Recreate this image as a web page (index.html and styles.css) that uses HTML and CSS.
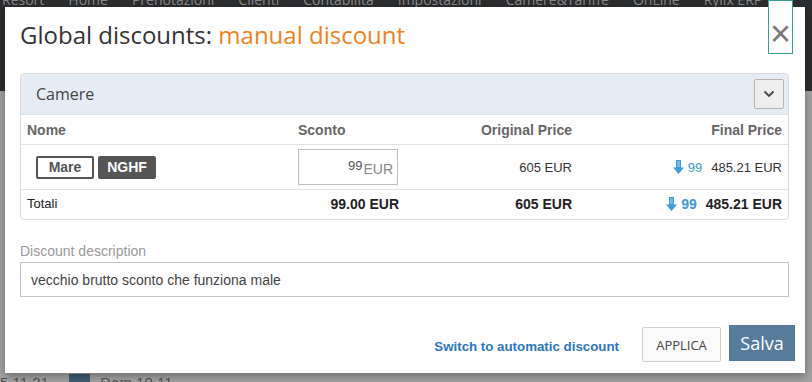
FILE: index.html
```html
<!DOCTYPE html>
<html lang="en">
<head>
  <meta charset="UTF-8" />
  <title>Global discounts</title>
  <link rel="stylesheet" href="styles.css">
</head>
<body>
  <div class="backdrop">
    <div class="app-nav">
      <span>Resort</span><span>Home</span><span>Prenotazioni</span><span>Clienti</span><span>Contabilità</span><span>Impostazioni</span><span>Camere&amp;Tariffe</span><span>OnLine</span><span>Rylix ERP</span>
    </div>
    <div class="app-body">
      <div class="app-foot">5.11 21 <span class="app-chip">8</span> Dom 10.11</div>
    </div>
  </div>

  <div class="modal">
    <button class="close-btn">&times;</button>
    <div class="modal-header">
      <h2>Global discounts: <span class="accent">manual discount</span></h2>
    </div>

    <div class="modal-body">
      <div class="panel">
        <div class="panel-heading">
          <span>Camere</span>
          <button class="toggle-btn">
            <svg width="12" height="8" viewBox="0 0 12 8"><path d="M1.5 1.5 L6 6 L10.5 1.5" fill="none" stroke="#444" stroke-width="1.8"/></svg>
          </button>
        </div>
        <div class="grid head">
          <div>Nome</div>
          <div>Sconto</div>
          <div class="right">Original Price</div>
          <div class="right">Final Price</div>
        </div>
        <div class="grid row">
          <div class="tags">
            <span class="tag">Mare</span>
            <span class="tag dark">NGHF</span>
          </div>
          <div>
            <div class="amount-input"><span class="val">99</span><span class="unit">EUR</span></div>
          </div>
          <div class="right">605 EUR</div>
          <div class="right final">
            <span class="disc"><svg class="arrow" width="11" height="14" viewBox="0 0 11 14"><path d="M3 0 H8 V7.5 H11 L5.5 14 L0 7.5 H3 Z" fill="#3b9ddb"/><path d="M4 2 H7 M4 4 H7 M4 6 H7" stroke="#a9d6f2" stroke-width="1"/></svg>99</span>
            485.21 EUR
          </div>
        </div>
        <div class="grid total">
          <div class="plain">Totali</div>
          <div class="right">99.00 EUR</div>
          <div class="right">605 EUR</div>
          <div class="right final">
            <span class="disc"><svg class="arrow" width="11" height="14" viewBox="0 0 11 14"><path d="M3 0 H8 V7.5 H11 L5.5 14 L0 7.5 H3 Z" fill="#3b9ddb"/><path d="M4 2 H7 M4 4 H7 M4 6 H7" stroke="#a9d6f2" stroke-width="1"/></svg>99</span>
            485.21 EUR
          </div>
        </div>
      </div>

      <div class="field">
        <label>Discount description</label>
        <div class="text-input">vecchio brutto sconto che funziona male</div>
      </div>
    </div>

    <div class="modal-footer">
      <a class="switch-link">Switch to automatic discount</a>
      <button class="btn-apply">APPLICA</button>
      <button class="btn-save">Salva</button>
    </div>
  </div>
</body>
</html>
```

FILE: styles.css
```css
/* Base */
* {
  box-sizing: border-box;
  margin: 0;
  padding: 0;
}

body {
  width: 812px;
  height: 382px;
  overflow: hidden;
  position: relative;
  font-family: 'Liberation Sans', Arial, sans-serif;
  background-color: #9c9c9c;
}

/* Dimmed app behind the modal */
.backdrop {
  height: 100%;
  display: flex;
  flex-direction: column;
}

.app-nav {
  height: 98px;
  background-color: #2c2d2f;
  color: #8a8a8a;
  font-family: 'Open Sans', sans-serif;
  font-size: 14px;
  display: flex;
  gap: 24px;
  line-height: 1;
  margin-top: -7px;
  padding-left: 2px;
}

.app-body {
  flex: 1;
  background-color: #a3a3a3;
  display: flex;
  align-items: flex-end;
}

.app-foot {
  color: #555;
  font-size: 15px;
  margin-bottom: -8px;
  height: 16px;
}

.app-chip {
  display: inline-block;
  background-color: #3d5d74;
  color: #3d5d74;
  width: 21px;
  margin: 0 6px 0 16px;
}

/* Modal */
.modal {
  position: absolute;
  left: 5px;
  top: 7px;
  width: 800px;
  height: 366px;
  background-color: #fff;
  box-shadow: 0 3px 9px rgba(0, 0, 0, 0.35);
  display: flex;
  flex-direction: column;
}

.close-btn {
  position: absolute;
  right: 12px;
  top: -7px;
  width: 25px;
  height: 54px;
  border: 1px solid #3a9e9b;
  background-color: #fff;
  color: #7a7a7a;
  font-family: 'Liberation Sans', Arial, sans-serif;
  font-size: 36px;
  line-height: 1;
  padding-top: 14px;
}

.modal-header {
  padding: 15px;
}

h2 {
  font-family: 'Open Sans', sans-serif;
  font-weight: 400;
  font-size: 24px;
  line-height: 26px;
  color: #333;
}

.accent {
  color: #f0821c;
}

.modal-body {
  padding: 10px 16px 0 15px;
}

/* Panel */
.panel {
  border: 1px solid #d9d9d9;
  border-radius: 4px;
}

.panel-heading {
  height: 41px;
  background-color: #e6ecf4;
  border-bottom: 1px solid #dde3ea;
  border-radius: 4px 4px 0 0;
  display: flex;
  align-items: center;
  justify-content: space-between;
  padding: 0 4px 0 15px;
  font-family: 'Open Sans', sans-serif;
  font-size: 16px;
  color: #444;
}

.toggle-btn {
  width: 30px;
  height: 30px;
  background-color: #eeeeee;
  border: 1px solid #b5b5b5;
  border-radius: 2px;
  display: flex;
  align-items: center;
  justify-content: center;
}

.grid {
  display: grid;
  grid-template-columns: 271px 113px 173px 1fr;
  align-items: center;
  font-size: 14px;
}

.grid > div {
  padding: 0 6px;
}

.grid .right {
  text-align: right;
}

.head {
  height: 30px;
  font-weight: 700;
  color: #666;
  border-bottom: 1px solid #e3e3e3;
}

.row {
  height: 45px;
  color: #333;
  font-size: 13px;
  border-bottom: 1px solid #e3e3e3;
}

.total {
  height: 29px;
  padding-bottom: 2px;
  font-weight: 700;
  color: #222;
}

.total .plain {
  font-weight: 400;
  font-size: 13px;
}

.tags {
  display: flex;
  gap: 4px;
  padding-left: 15px !important;
}

.tag {
  height: 23px;
  width: 58px;
  border: 2px solid #555;
  border-radius: 2px;
  font-weight: 700;
  font-size: 14px;
  color: #555;
  display: flex;
  align-items: center;
  justify-content: center;
}

.tag.dark {
  background-color: #555;
  color: #fff;
}

.amount-input {
  width: 100px;
  height: 36px;
  border: 1px solid #bdbdbd;
  display: flex;
  justify-content: flex-end;
  align-items: center;
  padding-right: 4px;
}

.amount-input .val {
  font-size: 13px;
  color: #555;
  margin-top: -4px;
  margin-right: 1px;
}

.amount-input .unit {
  font-size: 14px;
  color: #888;
  margin-top: 3px;
}

.final {
  display: flex;
  justify-content: flex-end;
  align-items: center;
  gap: 9px;
}

.disc {
  color: #3d9bd6;
  display: inline-flex;
  align-items: center;
  gap: 4px;
}

.total .disc {
  font-size: 14px;
}

/* Description */
.field {
  margin-top: 23px;
}

.field label {
  display: block;
  font-size: 14px;
  color: #999;
  margin-bottom: 3px;
}

.text-input {
  height: 35px;
  border: 1px solid #c4c4c4;
  padding: 0 10px;
  display: flex;
  align-items: center;
  font-size: 14px;
  color: #444;
}

/* Footer */
.modal-footer {
  margin-top: auto;
  padding: 0 10px 11px 0;
  display: flex;
  justify-content: flex-end;
  align-items: center;
}

.switch-link {
  font-size: 13.3px;
  font-weight: 700;
  color: #2b78c2;
  margin-right: 23px;
  margin-top: 6px;
}

.btn-apply {
  width: 79px;
  height: 35px;
  background-color: #fafafa;
  border: 1px solid #cfcfcf;
  border-radius: 2px;
  font-family: 'Open Sans', sans-serif;
  font-size: 13px;
  color: #444;
  margin-right: 8px;
  margin-top: 2px;
}

.btn-save {
  width: 66px;
  height: 36px;
  background-color: #567b9b;
  border: none;
  font-family: 'Open Sans', sans-serif;
  font-size: 18px;
  color: #fff;
  margin-top: -2px;
}
```
